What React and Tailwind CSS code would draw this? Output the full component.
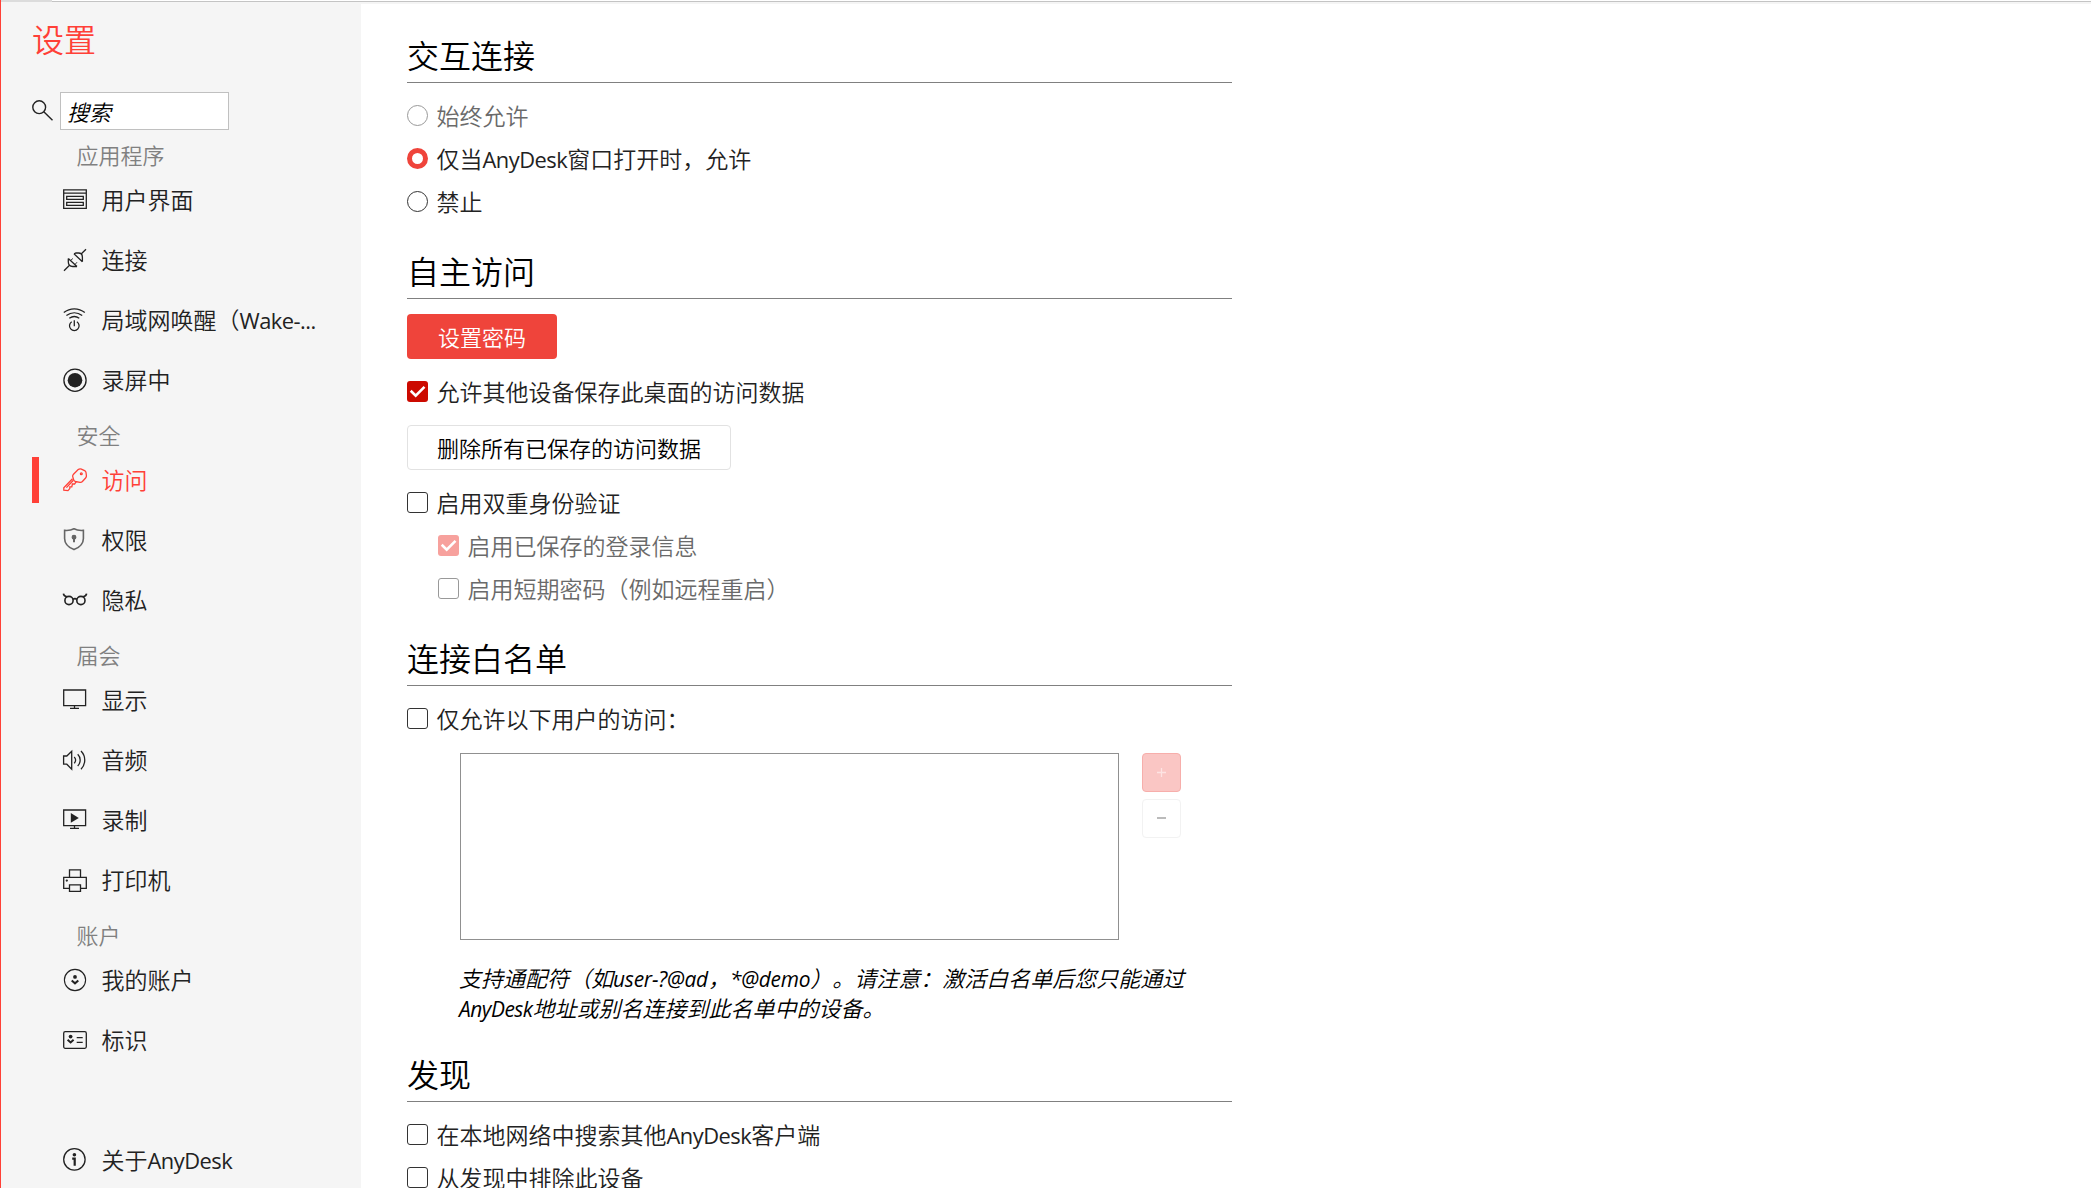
import React, { useState } from 'react';
import clsx from 'clsx';

const ICONS = {
  ui: (
    <>
      <path d="M.7 1.9h22.6v18.4H.7zM.7 5.2h22.6" />
      <path d="M3.7 8.3h16.6v3H3.7zM3.7 14.3h16.6v3H3.7z" />
    </>
  ),
  plug: (
    <>
      <path d="M1 22.7l5-5M5.3 10.5l8.7 8M5.3 10.5v3.3c0 3 1.6 4.7 4.4 4.7H14" />
      <path d="M7.5 12.5l2.4-2M12 16.5l2-2.3" strokeWidth=".9" />
      <path d="M23 1.3l-4.6 4.4M11 5.8l8.4 8M11 5.8l2-.8h2.6c2.600 0 3.800 1.600 3.800 4.200v4.600" />
    </>
  ),
  wake: (
    <>
      <path d="M.8 4.600c6.200-5 14.800-5 21 0M3.400 7.600c4.800-3.600 11-3.600 15.800 0M6.300 10.200c3-2 7-2 10 0" />
      <path d="M8.700 13.700a4.800 4.800 0 1 0 5.200 0M11.300 12.200v6" />
    </>
  ),
  record: (
    <>
      <circle cx="12" cy="12.200" r="11.100" />
      <circle cx="12" cy="12.200" r="7.300" fill="currentColor" stroke="none" />
    </>
  ),
  key: (
    <>
      <path d="M15.200 1.600q1.500-1.200 3.200-.5l3.200 1.500q1.200.6 1.400 1.900l.4 3q.2 1.400-.8 2.500l-3.200 3.500q-1 1-2.400.8l-4.600-.8q-1.300-.3-1.700-1.600l-1-3.300q-.3-1.300.8-2.400z" />
      <path d="M9.500 10.700L.8 19.800v2.400l4.200.4 1.800-2v-1.800h2l.6-2.800h2.200l1.700-2.300M10.400 12.300l-7 7.300" />
      <circle cx="18.300" cy="5.700" r=".9" />
    </>
  ),
  shield: (
    <>
      <path d="M11 .8c2.800 1.500 6 1.900 9.400 1.600v8c0 5.400-3.600 8.800-9.400 11.200-5.800-2.400-9.400-5.800-9.400-11.200v-8C5 2.700 8.200 2.300 11 .8z" strokeWidth="1.600" />
      <path d="M11 9.500v4.700" strokeWidth="2" />
      <circle cx="11" cy="9.200" r="1.800" fill="currentColor" />
    </>
  ),
  glasses: (
    <>
      <circle cx="6" cy="12.500" r="4.100" strokeWidth="1.600" />
      <circle cx="17.900" cy="12.500" r="4.100" strokeWidth="1.600" />
      <path d="M10 11.500c1-1.200 2.900-1.200 3.900 0M.4 5.700c.2 2 1.500 2.600 3.500 3M23.600 5.700c-.2 2-1.500 2.600-3.500 3" strokeWidth="1.600" />
    </>
  ),
  display: <path d="M.7 2h21.900v15.600H.7zM11.500 17.600v2.600M7 20.400h9" />,
  audio: (
    <path d="M.6 8h3.200l4.900-4.700v17.900l-4.900-5H.6zM11.200 9c1.900 1.700 1.900 4.500 0 6.200M14.700 6.200c3.300 3.200 3.300 8.600 0 11.800M18 3c5 5.200 5 13 0 18.200" />
  ),
  recording: (
    <>
      <path d="M.7 2h21.900v15.600H.7zM11.500 17.600v2.600M7 20.400h9" />
      <path d="M7.800 5v9.800l8-4.900z" fill="currentColor" stroke="none" />
    </>
  ),
  printer: (
    <>
      <path d="M6.500 9.300V1.900h11v7.400M6.500 20.300H.7v-11h22.600v11h-5.800" />
      <path d="M6.500 16.900h11v6.400h-11z" />
      <circle cx="3.800" cy="12.600" r=".5" />
    </>
  ),
  account: (
    <>
      <circle cx="12" cy="12" r="10.600" strokeWidth="1.100" />
      <circle cx="12" cy="8.900" r="1.900" fill="currentColor" stroke="none" />
      <path d="M8.700 12.400l3.300 2.900 3.300-2.900" strokeWidth="2" />
    </>
  ),
  badge: (
    <>
      <rect x=".7" y="3.700" width="22.600" height="16.600" rx="1.500" />
      <circle cx="7.600" cy="8.600" r="1.900" fill="currentColor" stroke="none" />
      <path d="M4.600 11.800l3 2.600 3-2.600" strokeWidth="2" />
      <path d="M13.700 9.700h6M13.700 14.300h6" />
    </>
  ),
  info: (
    <>
      <circle cx="11.400" cy="11.400" r="10.700" />
      <circle cx="11.400" cy="6.700" r="1.800" fill="currentColor" stroke="none" />
      <path d="M9.200 10.700h2.500v7" strokeWidth="2.200" />
    </>
  ),
};

const GROUPS = [
  {
    label: '应用程序',
    items: [
      { icon: 'ui', label: '用户界面' },
      { icon: 'plug', label: '连接' },
      { icon: 'wake', label: '局域网唤醒（', latin: 'Wake-...' },
      { icon: 'record', label: '录屏中' },
    ],
  },
  {
    label: '安全',
    items: [
      { icon: 'key', label: '访问' },
      { icon: 'shield', label: '权限', iconClass: 'text-[#666]' },
      { icon: 'glasses', label: '隐私' },
    ],
  },
  {
    label: '届会',
    items: [
      { icon: 'display', label: '显示' },
      { icon: 'audio', label: '音频' },
      { icon: 'recording', label: '录制' },
      { icon: 'printer', label: '打印机' },
    ],
  },
  {
    label: '账户',
    items: [
      { icon: 'account', label: '我的账户' },
      { icon: 'badge', label: '标识' },
    ],
  },
];

function Latin({ children, className }) {
  return (
    <span className={clsx("font-['Open_Sans','Noto_Sans',sans-serif] text-[0.95em] leading-none font-normal", className || 'tracking-[-0.023em]')}>
      {children}
    </span>
  );
}

function NavItem({ item, active, onClick }) {
  return (
    <button onClick={onClick} className={clsx('flex h-[60px] w-full items-center text-left text-[23px]', active ? 'text-[#ff4037]' : 'text-[#222]')}>
      <span className={clsx('mr-6 h-[46px] w-[7px]', active && 'bg-[#ff4037]')} />
      <svg viewBox="0 0 24 24" className={clsx('mr-[14.5px] size-6 shrink-0 overflow-visible', item.iconClass)} fill="none" stroke="currentColor" strokeWidth="1.3">
        {ICONS[item.icon]}
      </svg>
      <span className="pb-0.5 leading-[34px] whitespace-nowrap">
        {item.label}
        {item.latin && <Latin>{item.latin}</Latin>}
      </span>
    </button>
  );
}

function Heading({ children }) {
  return <h2 className="flex h-[54px] items-center border-b border-[#808080] pb-1 text-[32px] leading-none text-black">{children}</h2>;
}

function Radio({ checked, disabled, onChange, children }) {
  return (
    <label className={clsx('flex h-[43px] items-center gap-[8.5px]', disabled && 'text-[#6a6a6a]')}>
      <input type="radio" className="sr-only" checked={checked} disabled={disabled} onChange={onChange} />
      <span
        className={clsx(
          'size-[21px] shrink-0 rounded-full bg-white',
          checked ? 'border-[5.5px] border-[#ef443b]' : 'border',
          !checked && (disabled ? 'border-[#999]' : 'border-[#333]')
        )}
      />
      <span className="pb-px leading-[34px]">{children}</span>
    </label>
  );
}

function Checkbox({ defaultChecked = false, disabled, children }) {
  const [checked, setChecked] = useState(defaultChecked);
  return (
    <label className={clsx('flex h-[43px] items-center gap-[8.5px]', disabled && 'text-[#6a6a6a]')}>
      <input type="checkbox" className="sr-only" checked={checked} disabled={disabled} onChange={() => setChecked(!checked)} />
      <span
        className={clsx(
          'size-[21px] shrink-0 rounded-[3px]',
          checked ? (disabled ? 'bg-[#f7a19d]' : 'bg-[#cc0a00]') : 'border bg-white',
          !checked && (disabled ? 'border-[#999]' : 'border-[#333]')
        )}
      >
        {checked && (
          <svg viewBox="0 0 21 21" className="size-[21px]" fill="none" stroke="white" strokeWidth="2.600">
            <path d="M3.700 9.800l5 4.900 8.800-8.800" />
          </svg>
        )}
      </span>
      <span className="pb-px leading-[34px] whitespace-nowrap">{children}</span>
    </label>
  );
}

export default function App() {
  const [page, setPage] = useState('key');
  const [mode, setMode] = useState('window');

  return (
    <div className="flex h-screen flex-col overflow-hidden border-l border-[#ff4037] bg-white font-['Noto_Sans_CJK_SC',sans-serif] font-[350] text-[#222] [text-spacing-trim:space-all]">
      {/* Bottom edge of the tab strip */}
      <div className="flex h-0.5 shrink-0">
        <div className="w-[51px] bg-[#dcdcdc]" />
        <div className="flex-1 border-b border-[#c4c4c4]" />
      </div>

      <div className="flex min-h-0 flex-1">
        <aside className="w-[360px] shrink-0 bg-[#f5f5f5] pl-[31px]">
          <h1 className="flex h-[90px] items-start pt-5 text-[32px] leading-none text-[#ff4037]">设置</h1>
          <div className="flex h-[38px] items-center">
            <svg viewBox="0 0 21 21" className="mr-[7px] mb-1 size-[21px] translate-y-px" fill="none" stroke="#222" strokeWidth="1.400">
              <circle cx="7.200" cy="7.200" r="6.400" />
              <path d="M11.800 11.800l8.700 8.500" />
            </svg>
            <input
              placeholder="搜索"
              className="h-[38px] w-[169px] border border-[#c0c0c0] bg-white pl-1.5 text-[22px] italic placeholder:text-black"
            />
          </div>

          <nav>
            {GROUPS.map(group => (
              <section key={group.label}>
                <div className="flex h-10 items-center pt-[7px] pl-[44.5px] text-[22px] leading-none text-[#808080]">{group.label}</div>
                {group.items.map(item => (
                  <NavItem key={item.icon} item={item} active={page === item.icon} onClick={() => setPage(item.icon)} />
                ))}
              </section>
            ))}
            <div className="mt-[60px]">
              <NavItem item={{ icon: 'info', label: '关于', latin: 'AnyDesk' }} active={page === 'info'} onClick={() => setPage('info')} />
            </div>
          </nav>
        </aside>

        <main className="flex-1 overflow-hidden border-t-2 border-[#f5f5f5] pt-[25px] pl-[46px] text-[23px]">
          <div className="flex w-[825px] flex-col gap-[22px]">
            <section>
              <Heading>交互连接</Heading>
              <div className="pt-[11px]">
                <Radio checked={mode === 'always'} disabled onChange={() => setMode('always')}>始终允许</Radio>
                <Radio checked={mode === 'window'} onChange={() => setMode('window')}>
                  仅当<Latin>AnyDesk</Latin>窗口打开时，允许
                </Radio>
                <Radio checked={mode === 'never'} onChange={() => setMode('never')}>禁止</Radio>
              </div>
            </section>

            <section>
              <Heading>自主访问</Heading>
              <button className="mt-[15px] mb-[11px] block h-[45px] w-[150px] rounded bg-[#ef443b] pb-px text-[22px] text-white">设置密码</button>
              <Checkbox defaultChecked>允许其他设备保存此桌面的访问数据</Checkbox>
              <button className="mt-3 mb-[11px] block h-[45px] w-[324px] rounded border border-[#e2e2e2] bg-white pb-px text-[22px] text-black">删除所有已保存的访问数据</button>
              <Checkbox>启用双重身份验证</Checkbox>
              <div className="pl-[31px]">
                <Checkbox defaultChecked disabled>启用已保存的登录信息</Checkbox>
                <Checkbox disabled>启用短期密码（例如远程重启）</Checkbox>
              </div>
            </section>

            <section>
              <Heading>连接白名单</Heading>
              <div className="pt-[11px]">
                <Checkbox>仅允许以下用户的访问：</Checkbox>
              </div>
              <div className="mt-[13px] flex gap-[23px] pl-[53px]">
                <div className="h-[187px] w-[659px] border border-[#909090] bg-white" />
                <div className="flex flex-col gap-[7px]">
                  <button disabled className="flex size-[39px] items-center justify-center rounded border border-[#f7aeab] bg-[#fac6c4]">
                    <svg viewBox="0 0 9 9" className="size-[9px]" stroke="#fde3e2" strokeWidth="1.300">
                      <path d="M4.500 0v9M0 4.500h9" />
                    </svg>
                  </button>
                  <button disabled className="flex size-[39px] items-center justify-center rounded border border-[#f2f2f2] bg-white">
                    <span className="mb-0.5 h-0.5 w-[9px] bg-[#bbb]" />
                  </button>
                </div>
              </div>
              <p className="mt-[22px] mb-1 pl-[52px] text-[22px] leading-[30px] whitespace-nowrap text-black italic">
                支持通配符（如<Latin className="tracking-[-0.01em]">user-?@ad</Latin>，<Latin className="tracking-[-0.01em]">*@demo</Latin>）。请注意：激活白名单后您只能通过
                <br />
                <Latin>AnyDesk</Latin>地址或别名连接到此名单中的设备。
              </p>
            </section>

            <section>
              <Heading>发现</Heading>
              <div className="pt-[11px]">
                <Checkbox>
                  在本地网络中搜索其他<Latin>AnyDesk</Latin>客户端
                </Checkbox>
                <Checkbox>从发现中排除此设备</Checkbox>
              </div>
            </section>
          </div>
        </main>
      </div>
    </div>
  );
}
